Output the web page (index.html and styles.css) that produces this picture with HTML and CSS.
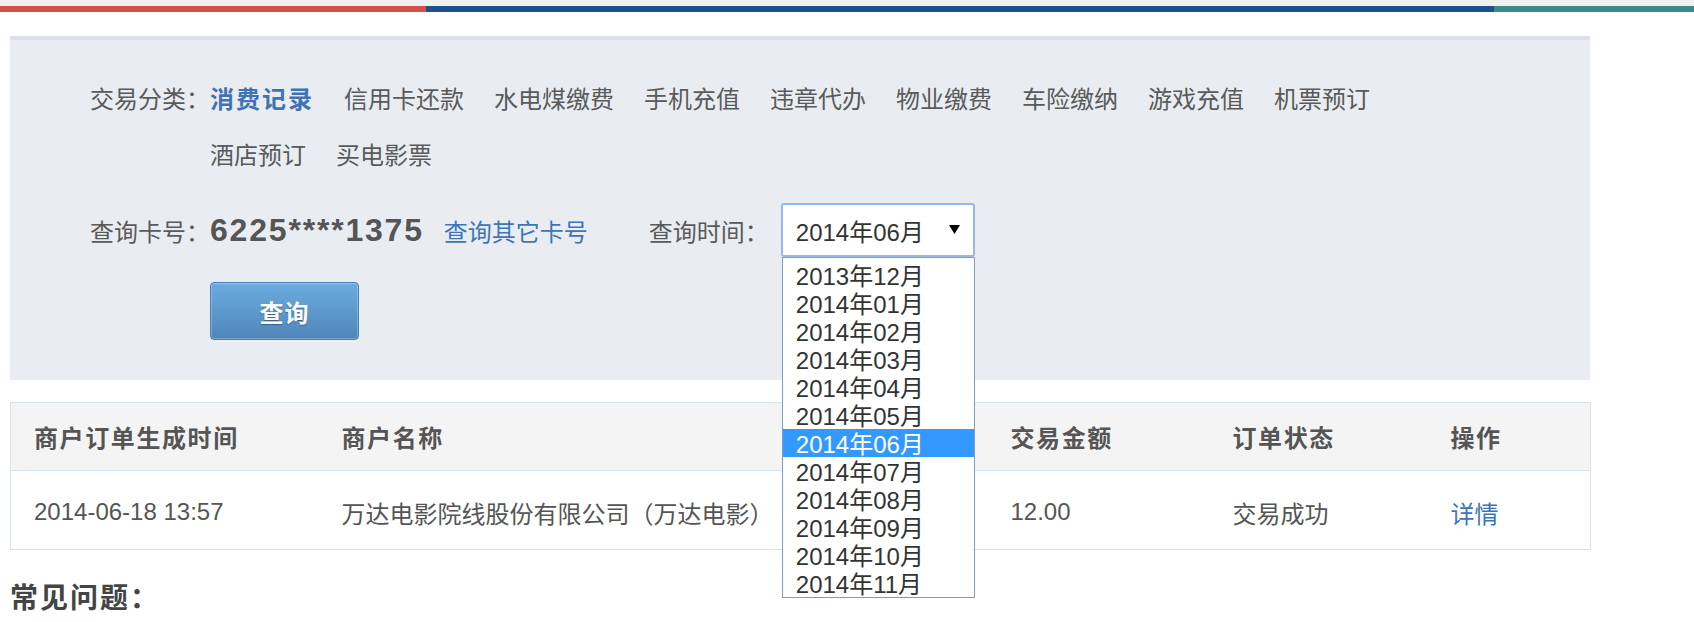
FILE: index.html
```html
<!DOCTYPE html>
<html lang="zh-CN">
<head>
<meta charset="utf-8">
<title>消费记录查询</title>
<link rel="stylesheet" href="styles.css">
</head>
<body>
<div class="topstrip"></div>
<div class="colorbar"><span class="seg seg-red"></span><span class="seg seg-blue"></span><span class="seg seg-teal"></span></div>
<div class="content">
  <section class="query-panel">
    <div class="cat-row">
      <span class="label">交易分类：</span>
      <ul class="cat-list">
        <li class="cat active">消费记录</li>
        <li class="cat">信用卡还款</li>
        <li class="cat">水电煤缴费</li>
        <li class="cat">手机充值</li>
        <li class="cat">违章代办</li>
        <li class="cat">物业缴费</li>
        <li class="cat">车险缴纳</li>
        <li class="cat">游戏充值</li>
        <li class="cat">机票预订</li>
        <li class="cat">酒店预订</li>
        <li class="cat">买电影票</li>
      </ul>
    </div>
    <div class="card-row">
      <span class="label">查询卡号：</span>
      <span class="card-no">6225****1375</span>
      <a class="link other-card" href="#">查询其它卡号</a>
      <span class="label time-label">查询时间：</span>
      <div class="select">
        <div class="select-box">
          <span class="select-value">2014年06月</span>
          <svg class="arrow" width="11" height="9" viewBox="0 0 11 9"><polygon points="0,0 11,0 5.5,9" fill="#000"/></svg>
        </div>
        <ul class="select-list">
          <li class="opt">2013年12月</li>
          <li class="opt">2014年01月</li>
          <li class="opt">2014年02月</li>
          <li class="opt">2014年03月</li>
          <li class="opt">2014年04月</li>
          <li class="opt">2014年05月</li>
          <li class="opt selected">2014年06月</li>
          <li class="opt">2014年07月</li>
          <li class="opt">2014年08月</li>
          <li class="opt">2014年09月</li>
          <li class="opt">2014年10月</li>
          <li class="opt">2014年11月</li>
        </ul>
      </div>
    </div>
    <div class="btn-row"><button class="btn-query" type="button">查询</button></div>
  </section>

  <table class="orders">
    <colgroup>
      <col class="c1"><col class="c2"><col class="c3"><col class="c4"><col class="c5">
    </colgroup>
    <thead>
      <tr><th>商户订单生成时间</th><th>商户名称</th><th>交易金额</th><th>订单状态</th><th>操作</th></tr>
    </thead>
    <tbody>
      <tr><td>2014-06-18 13:57</td><td>万达电影院线股份有限公司（万达电影）</td><td>12.00</td><td>交易成功</td><td><a class="link" href="#">详情</a></td></tr>
    </tbody>
  </table>

  <h3 class="faq-title">常见问题：</h3>
</div>
</body>
</html>
```

FILE: styles.css
```css
* { box-sizing: border-box; }

body {
  margin: 0;
  background: #fff;
  font-family: "Liberation Sans", "Noto Sans CJK SC", sans-serif;
  color: #5a5a5a;
  font-size: 24px;
}

ul { list-style: none; margin: 0; padding: 0; }

.topstrip { height: 6px; background: #f1f1f1; }

.colorbar { display: flex; height: 6px; }
.seg { display: block; height: 100%; }
.seg-red { width: 426px; background: #d6504a; }
.seg-blue { flex: 1; background: #1c4f8b; }
.seg-teal { width: 200px; background: #3d8a8c; }

.content {
  width: 1580px;
  margin: 24px 0 0 10px;
}

.query-panel {
  background: #e9edf2;
  border-top: 4px solid #dae1e9;
  padding: 32px 0 40px 80px;
}

.label {
  display: inline-block;
  width: 120px;
  flex: none;
  color: #5a5a5a;
  white-space: nowrap;
}

.cat-row { display: flex; align-items: flex-start; line-height: 56px; }
.cat-list { display: flex; flex-wrap: wrap; width: 1200px; }
.cat { margin-right: 30px; color: #5a5a5a; white-space: nowrap; }
.cat.active { color: #3f73b2; font-weight: bold; letter-spacing: 2px; }

.card-row {
  display: flex;
  align-items: center;
  height: 54px;
  margin-top: 19px;
}

.card-no {
  font-family: "Liberation Sans", sans-serif;
  font-weight: bold;
  font-size: 32px;
  letter-spacing: 1.8px;
  color: #555;
}

.link { color: #3d76b6; text-decoration: none; }
.other-card { margin-left: 20px; }
.time-label { margin-left: 61px; width: 132px; }

.select { position: relative; width: 194px; height: 54px; }
.select-box {
  display: flex;
  align-items: center;
  justify-content: space-between;
  height: 54px;
  padding: 0 13px 0 13px;
  background: #fff;
  border: 2px solid #93b9e6;
  border-radius: 3px;
  color: #333;
}
.arrow { display: block; margin-top: -2px; }

.select-list {
  position: absolute;
  top: 54px;
  left: 1px;
  width: 193px;
  background: #fff;
  border: 1px solid #7f9db9;
  padding-top: 3px;
  z-index: 5;
}
.opt {
  height: 28px;
  line-height: 31px;
  padding-left: 13px;
  color: #333;
  white-space: nowrap;
}
.opt.selected { background: #3399ff; color: #fff; }

.btn-row { margin-top: 25px; padding-left: 120px; }
.btn-query {
  display: block;
  width: 149px;
  height: 58px;
  border: 1px solid #4a7db3;
  border-radius: 4px;
  background: linear-gradient(#6cace0, #4f86b9);
  box-shadow: inset 0 0 0 1px rgba(255,255,255,0.25);
  color: #fff;
  font-family: "Liberation Sans", "Noto Sans CJK SC", sans-serif;
  font-size: 24px;
  font-weight: bold;
  letter-spacing: 1px;
  text-shadow: 0 1px 1px rgba(0,0,0,0.35);
  padding: 0;
}

.orders {
  width: 1580px;
  margin-top: 22px;
  border-collapse: collapse;
  table-layout: fixed;
  border: 1px solid #d9e3ee;
}
.c1 { width: 308px; }
.c2 { width: 669px; }
.c3 { width: 222px; }
.c4 { width: 218px; }
.c5 { width: 163px; }

.orders th {
  height: 68px;
  background: #f4f4f4;
  text-align: left;
  font-weight: bold;
  letter-spacing: 1.6px;
  color: #555;
  padding: 0 0 0 23px;
  border-bottom: 1px solid #d9e3ee;
}
.orders td {
  height: 79px;
  padding: 4px 0 0 23px;
  color: #555;
  white-space: nowrap;
}

.faq-title {
  margin: 30px 0 0 0;
  font-size: 28px;
  line-height: 38px;
  font-weight: bold;
  letter-spacing: 2px;
  color: #444;
}
```
